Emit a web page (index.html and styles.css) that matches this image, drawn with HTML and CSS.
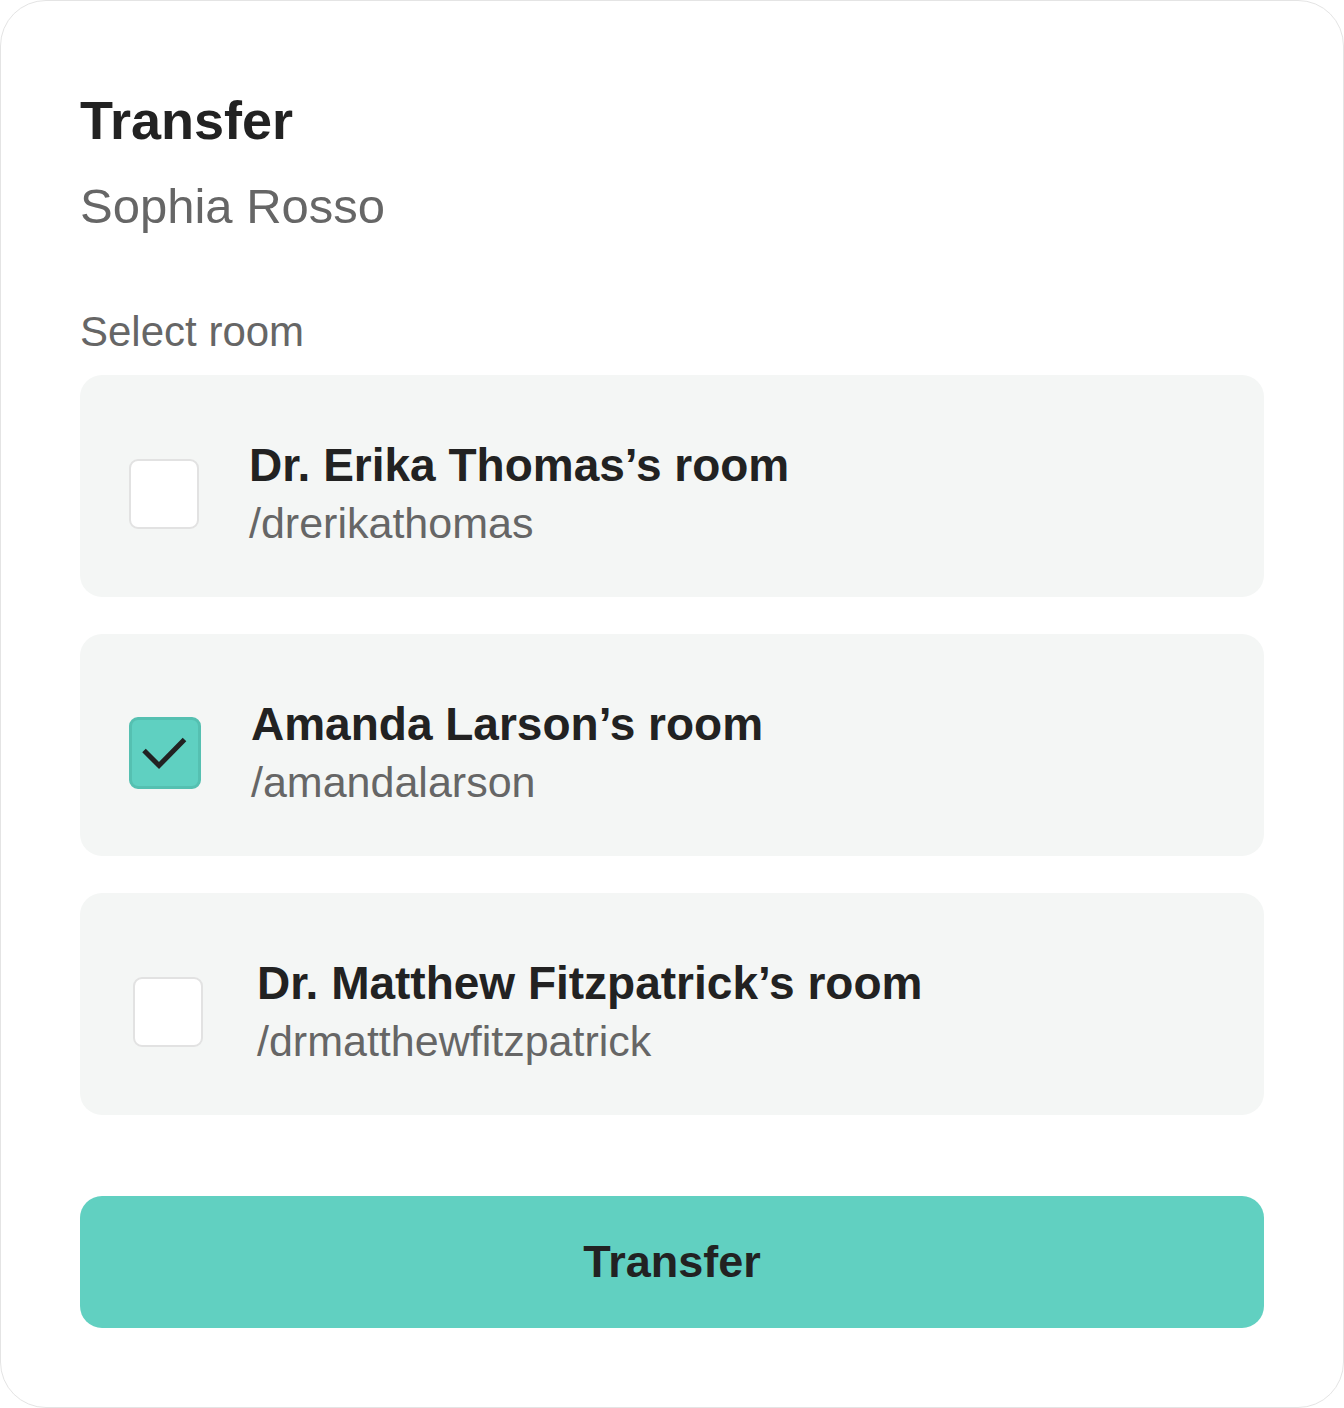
FILE: index.html
```html
<!DOCTYPE html>
<html lang="en">
<head>
<meta charset="utf-8">
<title>Transfer</title>
<link rel="stylesheet" href="styles.css">
</head>
<body>
<div class="card">
  <h1 class="title">Transfer</h1>
  <p class="patient">Sophia Rosso</p>
  <p class="label">Select room</p>
  <div class="rooms">
    <div class="room">
      <span class="check"></span>
      <div class="room-text">
        <div class="room-name">Dr. Erika Thomas’s room</div>
        <div class="room-slug">/drerikathomas</div>
      </div>
    </div>
    <div class="room">
      <span class="check check--on">
        <svg viewBox="0 0 66 66" width="66" height="66"><path d="M12 30.5 L27 45.5 L52.5 19.5" fill="none" stroke="#222222" stroke-width="5" stroke-linecap="butt" stroke-linejoin="miter"/></svg>
      </span>
      <div class="room-text">
        <div class="room-name">Amanda Larson’s room</div>
        <div class="room-slug">/amandalarson</div>
      </div>
    </div>
    <div class="room room--shift">
      <span class="check"></span>
      <div class="room-text">
        <div class="room-name">Dr. Matthew Fitzpatrick’s room</div>
        <div class="room-slug">/drmatthewfitzpatrick</div>
      </div>
    </div>
  </div>
  <button class="btn" type="button">Transfer</button>
</div>
</body>
</html>
```
FILE: styles.css
```css
* { box-sizing: border-box; }
html, body { margin: 0; padding: 0; background: #ffffff; }
body { font-family: "Liberation Sans", Arial, sans-serif; color: #222222; }

.card {
  width: 1344px;
  height: 1408px;
  border: 1px solid #e4e4e4;
  border-radius: 46px;
  background: #ffffff;
  padding: 87px 79px 0 79px;
  display: flex;
  flex-direction: column;
}

.title {
  margin: 0;
  font-size: 54px;
  line-height: 64px;
  font-weight: 700;
  color: #222222;
}

.patient {
  margin: 26px 0 0 0;
  font-size: 49px;
  line-height: 56px;
  font-weight: 400;
  color: #666666;
}

.label {
  margin: 74px 0 0 0;
  font-size: 42px;
  line-height: 48px;
  color: #666666;
}

.rooms {
  margin-top: 19px;
  display: flex;
  flex-direction: column;
  gap: 37px;
}

.room {
  display: flex;
  align-items: center;
  gap: 50px;
  background: #f4f6f5;
  border-radius: 22px;
  padding: 62px 40px 51px 49px;
  height: 222px;
}

.room--shift {
  padding-left: 53px;
  gap: 54px;
}

.check {
  flex: 0 0 auto;
  width: 70px;
  height: 70px;
  border: 2px solid #e2e2e2;
  border-radius: 9px;
  background: #ffffff;
  margin-top: 4px;
  display: flex;
  align-items: center;
  justify-content: center;
}

.check--on {
  width: 72px;
  height: 72px;
  background: #5fd0c1;
  border: 3px solid #55c0b1;
  margin-top: 4px;
}

.check--on svg { display: block; flex: 0 0 auto; }

.room-text { display: flex; flex-direction: column; }

.room-name {
  font-size: 46px;
  line-height: 56px;
  font-weight: 700;
  color: #222222;
}

.room-slug {
  margin-top: 6px;
  font-size: 43px;
  line-height: 48px;
  color: #666666;
}

.btn {
  margin-top: 81px;
  height: 132px;
  width: 100%;
  border: 0;
  border-radius: 22px;
  background: #61d0c1;
  color: #222222;
  font-family: "Liberation Sans", Arial, sans-serif;
  font-size: 45px;
  font-weight: 700;
  cursor: pointer;
}
```
